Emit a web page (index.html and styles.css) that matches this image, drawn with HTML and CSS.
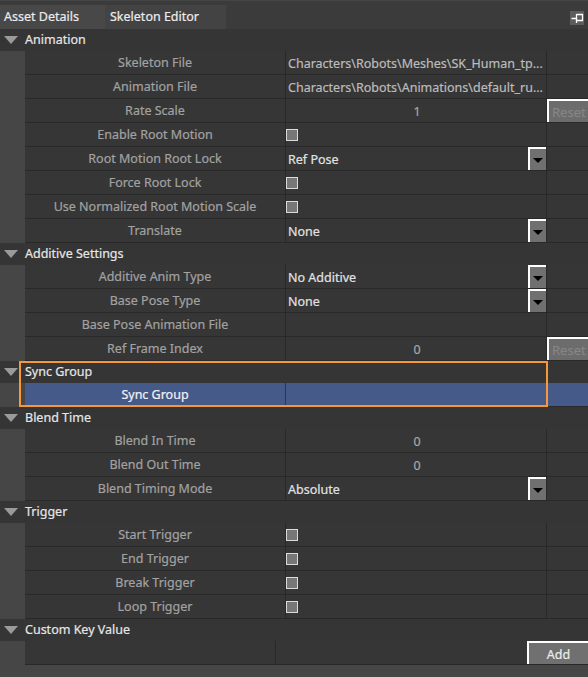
FILE: index.html
```html
<!DOCTYPE html>
<html>
<head>
<meta charset="utf-8">
<link rel="stylesheet" href="styles.css">
</head>
<body>
<div class="panel">
  <div class="tabbar">
    <div class="tab active">Asset Details</div>
    <div class="tab">Skeleton Editor</div>
    <div class="tab-spacer"></div>
    <div class="pin">
      <svg width="14" height="14" viewBox="0 0 14 14">
        <rect width="14" height="14" fill="#5c5c5c"/>
        <path d="M1.5 7.5H6.5M6.5 3V12M6.5 3.5H12.5V9.5H6.5" stroke="#ffffff" stroke-width="1.3" fill="none"/>
      </svg>
    </div>
  </div>

  <div class="section">
    <div class="sec-head"><span class="arrow"></span>Animation</div>
    <div class="sec-body">
      <div class="row"><div class="label">Skeleton File</div><div class="value"><span class="path">Characters\Robots\Meshes\SK_Human_tp...</span></div><div class="extra"></div></div>
      <div class="row"><div class="label">Animation File</div><div class="value"><span class="path">Characters\Robots\Animations\default_ru...</span></div><div class="extra"></div></div>
      <div class="row"><div class="label">Rate Scale</div><div class="value center"><span class="num">1</span></div><div class="extra"><div class="btn reset">Reset</div></div></div>
      <div class="row"><div class="label">Enable Root Motion</div><div class="value"><span class="check"></span></div><div class="extra"></div></div>
      <div class="row"><div class="label">Root Motion Root Lock</div><div class="value"><span class="choice">Ref Pose</span><span class="dd"></span></div><div class="extra"></div></div>
      <div class="row"><div class="label">Force Root Lock</div><div class="value"><span class="check"></span></div><div class="extra"></div></div>
      <div class="row"><div class="label">Use Normalized Root Motion Scale</div><div class="value"><span class="check"></span></div><div class="extra"></div></div>
      <div class="row"><div class="label">Translate</div><div class="value"><span class="choice">None</span><span class="dd"></span></div><div class="extra"></div></div>
    </div>
  </div>

  <div class="section">
    <div class="sec-head"><span class="arrow"></span>Additive Settings</div>
    <div class="sec-body">
      <div class="row"><div class="label">Additive Anim Type</div><div class="value"><span class="choice">No Additive</span><span class="dd"></span></div><div class="extra"></div></div>
      <div class="row"><div class="label">Base Pose Type</div><div class="value"><span class="choice">None</span><span class="dd"></span></div><div class="extra"></div></div>
      <div class="row"><div class="label">Base Pose Animation File</div><div class="value"></div><div class="extra"></div></div>
      <div class="row"><div class="label">Ref Frame Index</div><div class="value center"><span class="num">0</span></div><div class="extra"><div class="btn reset">Reset</div></div></div>
    </div>
  </div>

  <div class="section sync">
    <div class="sec-head"><span class="arrow"></span>Sync Group</div>
    <div class="sec-body">
      <div class="row selected"><div class="label">Sync Group</div><div class="value"></div><div class="extra"></div></div>
    </div>
    <div class="highlight"></div>
  </div>

  <div class="section">
    <div class="sec-head"><span class="arrow"></span>Blend Time</div>
    <div class="sec-body">
      <div class="row"><div class="label">Blend In Time</div><div class="value center"><span class="num">0</span></div><div class="extra"></div></div>
      <div class="row"><div class="label">Blend Out Time</div><div class="value center"><span class="num">0</span></div><div class="extra"></div></div>
      <div class="row"><div class="label">Blend Timing Mode</div><div class="value"><span class="choice">Absolute</span><span class="dd"></span></div><div class="extra"></div></div>
    </div>
  </div>

  <div class="section">
    <div class="sec-head"><span class="arrow"></span>Trigger</div>
    <div class="sec-body">
      <div class="row"><div class="label">Start Trigger</div><div class="value"><span class="check"></span></div><div class="extra"></div></div>
      <div class="row"><div class="label">End Trigger</div><div class="value"><span class="check"></span></div><div class="extra"></div></div>
      <div class="row"><div class="label">Break Trigger</div><div class="value"><span class="check"></span></div><div class="extra"></div></div>
      <div class="row"><div class="label">Loop Trigger</div><div class="value"><span class="check"></span></div><div class="extra"></div></div>
    </div>
  </div>

  <div class="section">
    <div class="sec-head"><span class="arrow"></span>Custom Key Value</div>
    <div class="sec-body">
      <div class="row custom"><div class="key"></div><div class="val"></div><div class="btn add">Add</div></div>
    </div>
  </div>
</div>
</body>
</html>
```

FILE: styles.css
```css
html, body {
  margin: 0;
  padding: 0;
}
body {
  width: 588px;
  height: 677px;
  overflow: hidden;
  background: #464646;
  font-family: "Noto Sans", "DejaVu Sans", sans-serif;
  font-size: 12.5px;
  -webkit-text-stroke: 0.2px;
}
.panel {
  display: flex;
  flex-direction: column;
  width: 588px;
}
.tabbar {
  display: flex;
  align-items: flex-end;
  height: 29px;
  background: #3b3b3b;
  border-top: 1px solid #454545;
  box-sizing: border-box;
}
.tab {
  height: 24px;
  line-height: 23px;
  padding: 0 4px;
  color: #ececec;
  background: #434343;
  box-sizing: border-box;
}
.tab.active {
  width: 105px;
  background: #484848;
}
.tab + .tab {
  width: 121px;
  padding-left: 5px;
}
.tab-spacer {
  flex: 1;
}
.pin {
  align-self: center;
  width: 14px;
  height: 14px;
  margin-right: 4px;
  margin-top: 6px;
}
.pin svg {
  display: block;
}
.section {
  display: flex;
  flex-direction: column;
}
.sec-head {
  display: flex;
  align-items: center;
  height: 22px;
  background: #353535;
  color: #e6e6e6;
  padding-left: 4px;
  padding-bottom: 1px;
  box-sizing: border-box;
}
.arrow {
  width: 0;
  height: 0;
  border-left: 7px solid transparent;
  border-right: 7px solid transparent;
  border-top: 8px solid #9a9a9a;
  margin-right: 7px;
  margin-top: 1px;
}
.sec-body {
  display: flex;
  flex-direction: column;
  padding-left: 25px;
  background: #464646;
}
.row {
  display: flex;
  height: 24px;
  background: #363636;
  border-bottom: 1px solid #292929;
  box-sizing: border-box;
}
.label {
  width: 261px;
  border-right: 1px solid #292929;
  box-sizing: border-box;
  text-align: center;
  line-height: 24px;
  color: #a2a2a2;
  white-space: nowrap;
  overflow: hidden;
}
.value {
  display: flex;
  align-items: center;
  width: 261px;
  border-right: 1px solid #292929;
  box-sizing: border-box;
  padding-left: 2px;
  white-space: nowrap;
  overflow: hidden;
}
.value.center {
  justify-content: center;
}
.extra {
  flex: 1;
  display: flex;
}
.path {
  color: #bcbcbc;
  overflow: hidden;
  white-space: nowrap;
  margin-top: 1px;
}
.num {
  color: #a6a6a6;
  margin-top: 1px;
}
.choice {
  flex: 1;
  color: #e2e2e2;
  margin-top: 1px;
}
.check {
  width: 12px;
  height: 12px;
  margin-left: -2px;
  background: #777777;
  border: 1px solid #dadada;
  box-sizing: border-box;
}
.dd {
  width: 18px;
  height: 23px;
  background: #707070;
  border-top: 2px solid #ffffff;
  border-left: 2px solid #ffffff;
  box-sizing: border-box;
  display: flex;
  align-items: center;
  justify-content: center;
}
.dd::after {
  content: "";
  width: 0;
  height: 0;
  border-left: 5px solid transparent;
  border-right: 5px solid transparent;
  border-top: 5px solid #000000;
  margin-top: 1px;
}
.btn {
  display: flex;
  align-items: center;
  justify-content: center;
  height: 23px;
  background: #6c6c6c;
  border-top: 2px solid #ffffff;
  border-left: 2px solid #ffffff;
  box-sizing: border-box;
}
.reset {
  flex: 1;
  justify-content: flex-start;
  color: #868686;
  font-size: 13px;
  padding-left: 3px;
  padding-top: 1px;
  overflow: hidden;
}
.selected {
  background: #465a8a;
}
.selected .label {
  color: #f2f2f2;
  border-right-color: #2c3756;
}
.selected .value {
  border-right-color: #465a8a;
}
.sync {
  position: relative;
}
.highlight {
  position: absolute;
  left: 19px;
  top: 0;
  width: 529px;
  height: 46px;
  border: 2px solid #f7973a;
  box-sizing: border-box;
  pointer-events: none;
}
.custom .key {
  width: 251px;
  border-right: 1px solid #292929;
  box-sizing: border-box;
}
.custom .val {
  flex: 1;
}
.add {
  width: 61px;
  color: #ececec;
  background: #707070;
  padding-top: 1px;
}
```
